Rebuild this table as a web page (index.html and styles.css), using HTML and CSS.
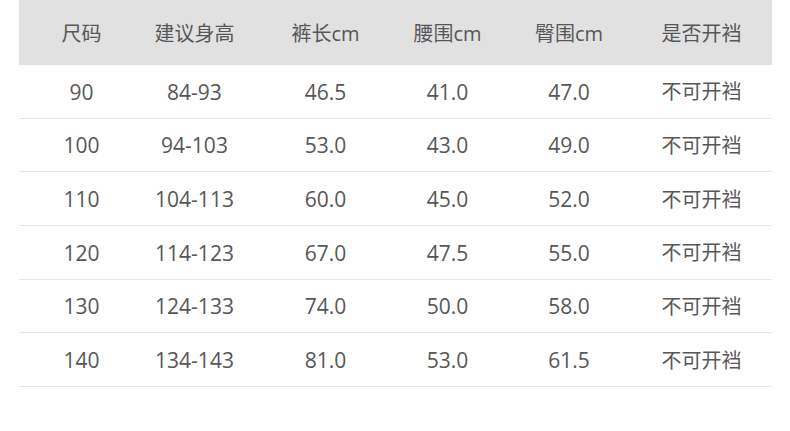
FILE: index.html
```html
<!DOCTYPE html>
<html lang="zh">
<head>
<meta charset="utf-8">
<link rel="stylesheet" href="styles.css">
</head>
<body>
<div class="size-table">
  <div class="row head">
    <div class="cell">尺码</div><div class="cell">建议身高</div><div class="cell">裤长cm</div><div class="cell">腰围cm</div><div class="cell">臀围cm</div><div class="cell">是否开裆</div>
  </div>
  <div class="row">
    <div class="cell">90</div><div class="cell">84-93</div><div class="cell">46.5</div><div class="cell">41.0</div><div class="cell">47.0</div><div class="cell">不可开裆</div>
  </div>
  <div class="row">
    <div class="cell">100</div><div class="cell">94-103</div><div class="cell">53.0</div><div class="cell">43.0</div><div class="cell">49.0</div><div class="cell">不可开裆</div>
  </div>
  <div class="row">
    <div class="cell">110</div><div class="cell">104-113</div><div class="cell">60.0</div><div class="cell">45.0</div><div class="cell">52.0</div><div class="cell">不可开裆</div>
  </div>
  <div class="row">
    <div class="cell">120</div><div class="cell">114-123</div><div class="cell">67.0</div><div class="cell">47.5</div><div class="cell">55.0</div><div class="cell">不可开裆</div>
  </div>
  <div class="row">
    <div class="cell">130</div><div class="cell">124-133</div><div class="cell">74.0</div><div class="cell">50.0</div><div class="cell">58.0</div><div class="cell">不可开裆</div>
  </div>
  <div class="row">
    <div class="cell">140</div><div class="cell">134-143</div><div class="cell">81.0</div><div class="cell">53.0</div><div class="cell">61.5</div><div class="cell">不可开裆</div>
  </div>
</div>
</body>
</html>
```
FILE: styles.css
```css
html, body {
  margin: 0;
  padding: 0;
  background: #ffffff;
}
body {
  font-family: "Open Sans", "Noto Sans CJK SC", sans-serif;
  color: #575757;
  font-size: 21px;
}
.size-table {
  width: 753px;
  margin-left: 19px;
}
.row {
  display: grid;
  grid-template-columns: 125px 101px 161px 83px 160px 123px;
  align-items: center;
  height: 53.67px;
  box-sizing: border-box;
  border-bottom: 1px solid #e6e6e6;
}
.row.head {
  height: 65px;
  background: #e1e1e1;
  border-bottom: none;
  font-size: 20px;
}
.cell {
  text-align: center;
  line-height: 1;
  white-space: nowrap;
  padding-top: 2px;
}
.cell:last-child {
  padding-right: 18px;
  font-size: 20px;
}
```
